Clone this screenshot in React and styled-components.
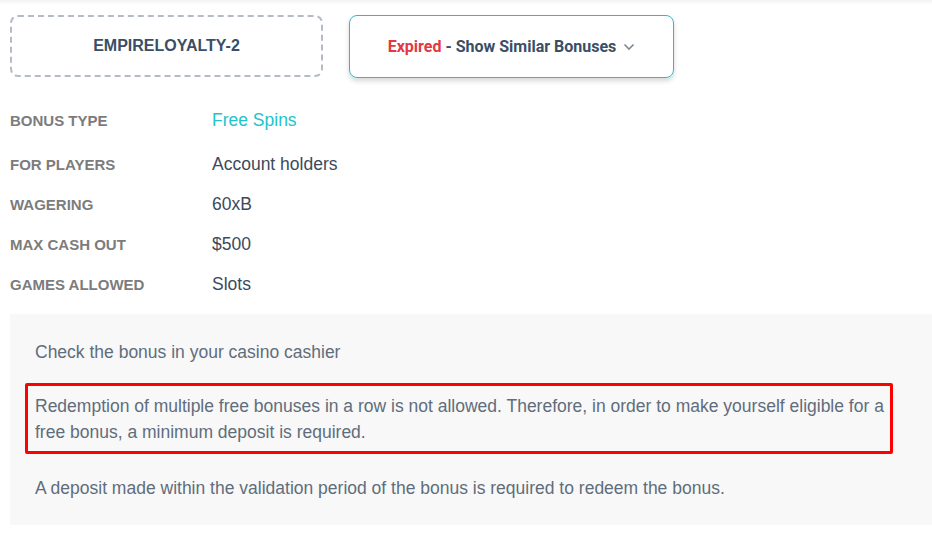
import React from "react";
import styled, { createGlobalStyle } from "styled-components";

const GlobalStyle = createGlobalStyle`
  html, body {
    margin: 0;
    padding: 0;
    background: #fff;
  }
  body {
    font-family: "Liberation Sans", Arial, sans-serif;
  }
`;

const details = [
  { label: "Bonus type", value: "Free Spins", accent: true },
  { label: "For players", value: "Account holders" },
  { label: "Wagering", value: "60xB" },
  { label: "Max cash out", value: "$500" },
  { label: "Games allowed", value: "Slots" },
];

const App = () => (
  <Page>
    <GlobalStyle />
    <TopShade />
    <Actions>
      <CodeBox>EMPIRELOYALTY-2</CodeBox>
      <SimilarButton>
        <Expired>Expired</Expired>&nbsp;- Show Similar Bonuses
        <Chevron viewBox="0 0 12 8">
          <path d="M1.5 1.5 L6 6 L10.5 1.5" fill="none" stroke="#7f8891" strokeWidth="1.6" />
        </Chevron>
      </SimilarButton>
    </Actions>
    <DetailList>
      {details.map((d, i) => (
        <DetailRow key={d.label} $first={i === 0}>
          <Label>{d.label}</Label>
          <Value $accent={d.accent}>{d.value}</Value>
        </DetailRow>
      ))}
    </DetailList>
    <Terms>
      <Para>Check the bonus in your casino cashier</Para>
      <Highlighted>
        Redemption of multiple free bonuses in a row is not allowed. Therefore, in order to make yourself eligible for a free bonus, a minimum deposit is required.
      </Highlighted>
      <Para>A deposit made within the validation period of the bonus is required to redeem the bonus.</Para>
    </Terms>
  </Page>
);

export default App;

const Page = styled.div`
  width: 932px;
  height: 540px;
  overflow: hidden;
  position: relative;
  font-family: "Liberation Sans", Arial, sans-serif;
`;

const TopShade = styled.div`
  height: 5px;
  background: linear-gradient(to bottom, rgba(0, 0, 0, 0.05), rgba(0, 0, 0, 0));
  margin-bottom: 10px;
`;

const Actions = styled.div`
  display: flex;
  gap: 26px;
  padding-left: 10px;
`;

const CodeBox = styled.div`
  box-sizing: border-box;
  width: 313px;
  height: 62px;
  border: 2px dashed #b4bbc5;
  border-radius: 8px;
  display: flex;
  align-items: center;
  justify-content: center;
  font-family: "Liberation Sans", Arial, sans-serif;
  font-weight: 700;
  font-size: 16px;
  color: #3a4e66;
`;

const SimilarButton = styled.div`
  box-sizing: border-box;
  width: 325px;
  height: 63px;
  border: 1px solid #1cc3cc;
  border-radius: 8px;
  box-shadow: 0 3px 5px rgba(0, 0, 0, 0.16);
  display: flex;
  align-items: center;
  justify-content: center;
  font-family: Roboto, "Liberation Sans", sans-serif;
  font-weight: 700;
  font-size: 16px;
  color: #3a4e66;
`;

const Expired = styled.span`
  color: #e2383f;
`;

const Chevron = styled.svg`
  width: 12px;
  height: 8px;
  margin-left: 7px;
`;

const DetailList = styled.div`
  margin-top: 27px;
  padding-left: 10px;
  display: flex;
  flex-direction: column;
`;

const DetailRow = styled.div`
  display: grid;
  grid-template-columns: 202px 1fr;
  align-items: center;
  height: ${(p) => (p.$first ? "48px" : "40px")};
  margin-top: ${(p) => (p.$first ? "-9px" : "0")};
`;

const Label = styled.div`
  font-family: "Liberation Sans", Arial, sans-serif;
  text-transform: uppercase;
  font-weight: 700;
  font-size: 15px;
  color: #7c7c7c;
`;

const Value = styled.div`
  font-family: "Liberation Sans", Arial, sans-serif;
  font-size: 17.5px;
  color: ${(p) => (p.$accent ? "#22c3cb" : "#3b4a5c")};
`;

const Terms = styled.div`
  margin: 10px 0 0 10px;
  background: #f8f8f8;
  padding: 25px 0 23px 25px;
  height: 211px;
  box-sizing: border-box;
`;

const Para = styled.p`
  margin: 0;
  font-family: "Liberation Sans", Arial, sans-serif;
  font-size: 17.5px;
  line-height: 26px;
  color: #5f6d7c;
`;

const Highlighted = styled(Para)`
  margin: 18px 0 21px -10px;
  width: 868px;
  box-sizing: border-box;
  border: 3px solid #ff0000;
  border-radius: 2px;
  padding: 7px 0 6px 7px;
`;
